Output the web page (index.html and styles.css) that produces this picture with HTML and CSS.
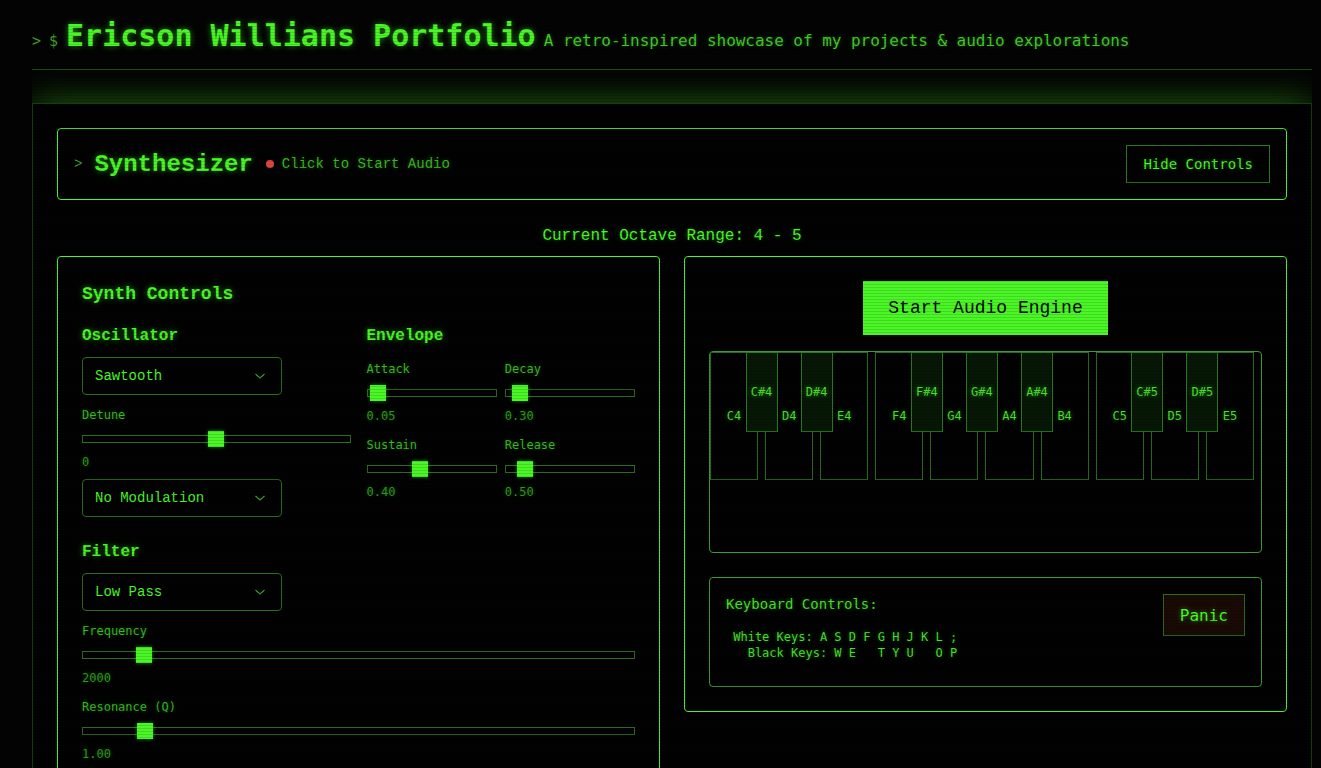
FILE: index.html
```html
<!DOCTYPE html>
<html lang="en">
<head>
<meta charset="utf-8">
<title>Ericson Willians Portfolio</title>
<link rel="stylesheet" href="styles.css">
</head>
<body>
<div class="page">
  <header class="site-header">
    <span class="prompt">&gt;</span>
    <span class="prompt">$</span>
    <h1 class="site-title">Ericson Willians Portfolio</h1>
    <span class="site-sub">A retro-inspired showcase of my projects &amp; audio explorations</span>
  </header>

  <main class="window">
    <div class="synth-head">
      <div class="synth-head-left">
        <span class="head-prompt">&gt;</span>
        <h2 class="synth-title">Synthesizer</h2>
        <span class="status-dot"></span>
        <span class="status-text">Click to Start Audio</span>
      </div>
      <button class="ghost-btn">Hide Controls</button>
    </div>

    <div class="octave">Current Octave Range: 4 - 5</div>

    <div class="panels">
      <section class="panel controls">
        <h3 class="panel-title">Synth Controls</h3>
        <div class="two-col">
          <div class="col">
            <h4 class="sec-title">Oscillator</h4>
            <div class="select-wrap">
              <select class="sel"><option>Sawtooth</option></select>
              <svg class="chev" width="12" height="8" viewBox="0 0 12 8"><path d="M1.5 2 L6 6 L10.5 2" fill="none" stroke="#3b9a2a" stroke-width="1.3"/></svg>
            </div>
            <div class="group g-detune">
              <label class="lbl">Detune</label>
              <input class="range" type="range" min="-100" max="100" value="0">
              <div class="val">0</div>
            </div>
            <div class="select-wrap">
              <select class="sel"><option>No Modulation</option></select>
              <svg class="chev" width="12" height="8" viewBox="0 0 12 8"><path d="M1.5 2 L6 6 L10.5 2" fill="none" stroke="#3b9a2a" stroke-width="1.3"/></svg>
            </div>
          </div>
          <div class="col">
            <h4 class="sec-title env-title">Envelope</h4>
            <div class="env-grid">
              <div class="group">
                <label class="lbl">Attack</label>
                <input class="range" type="range" min="0.01" max="2" step="0.01" value="0.05">
                <div class="val">0.05</div>
              </div>
              <div class="group">
                <label class="lbl">Decay</label>
                <input class="range" type="range" min="0.01" max="5" step="0.01" value="0.30">
                <div class="val">0.30</div>
              </div>
              <div class="group">
                <label class="lbl">Sustain</label>
                <input class="range" type="range" min="0" max="1" step="0.01" value="0.40">
                <div class="val">0.40</div>
              </div>
              <div class="group">
                <label class="lbl">Release</label>
                <input class="range" type="range" min="0.01" max="5" step="0.01" value="0.50">
                <div class="val">0.50</div>
              </div>
            </div>
          </div>
        </div>

        <div class="filter">
          <h4 class="sec-title">Filter</h4>
          <div class="select-wrap">
            <select class="sel"><option>Low Pass</option></select>
            <svg class="chev" width="12" height="8" viewBox="0 0 12 8"><path d="M1.5 2 L6 6 L10.5 2" fill="none" stroke="#3b9a2a" stroke-width="1.3"/></svg>
          </div>
          <div class="group g-freq">
            <label class="lbl">Frequency</label>
            <input class="range" type="range" min="20" max="20000" value="2000">
            <div class="val">2000</div>
          </div>
          <div class="group g-res">
            <label class="lbl">Resonance (Q)</label>
            <input class="range" type="range" min="0" max="10" step="0.01" value="1">
            <div class="val">1.00</div>
          </div>
        </div>
      </section>

      <section class="panel keys-panel">
        <div class="start-row"><button class="start-btn">Start Audio Engine</button></div>
        <div class="piano">
          <div class="wkey"><span>C4</span></div>
          <div class="wkey"><span>D4</span></div>
          <div class="wkey"><span>E4</span></div>
          <div class="wkey"><span>F4</span></div>
          <div class="wkey"><span>G4</span></div>
          <div class="wkey"><span>A4</span></div>
          <div class="wkey"><span>B4</span></div>
          <div class="wkey"><span>C5</span></div>
          <div class="wkey"><span>D5</span></div>
          <div class="wkey"><span>E5</span></div>
          <div class="bkey" style="left:35.5px"><span>C#4</span></div>
          <div class="bkey" style="left:90.6px"><span>D#4</span></div>
          <div class="bkey" style="left:200.8px"><span>F#4</span></div>
          <div class="bkey" style="left:255.9px"><span>G#4</span></div>
          <div class="bkey" style="left:311px"><span>A#4</span></div>
          <div class="bkey" style="left:421.2px"><span>C#5</span></div>
          <div class="bkey" style="left:476.3px"><span>D#5</span></div>
        </div>
        <div class="kb-box">
          <div class="kb-info">
            <p class="kb-title">Keyboard Controls:</p>
            <pre class="kb-map"> White Keys: A S D F G H J K L ;
   Black Keys: W E   T Y U   O P</pre>
          </div>
          <button class="panic-btn">Panic</button>
        </div>
      </section>
    </div>
  </main>
</div>
</body>
</html>
```

FILE: styles.css
```css
* { box-sizing: border-box; }

html, body {
  margin: 0;
  padding: 0;
  background: #030303;
  color: #4af626;
  font-family: "Liberation Mono", monospace;
}

body::after {
  content: "";
  position: fixed;
  inset: 0;
  pointer-events: none;
  background: repeating-linear-gradient(to bottom,
    rgba(0,0,0,0) 0px, rgba(0,0,0,0) 2px,
    rgba(0,0,0,0.12) 2px, rgba(0,0,0,0.12) 3px);
  z-index: 10;
}

.page {
  width: 1280px;
  margin-left: 32px;
  height: 768px;
  overflow: hidden;
}

/* header */
.site-header {
  display: flex;
  align-items: baseline;
  gap: 8px;
  padding-top: 18px;
  padding-bottom: 15px;
  border-bottom: 1px solid #1d4a12;
}
.prompt {
  font-family: "DejaVu Sans Mono", monospace;
  font-size: 15px;
  color: #3aa126;
}
.site-title {
  margin: 0;
  font-family: "DejaVu Sans Mono", monospace;
  font-size: 30px;
  line-height: 36px;
  font-weight: bold;
  color: #4af626;
  text-shadow: 0 0 6px rgba(74, 246, 38, 0.55);
}
.site-sub {
  font-family: "DejaVu Sans Mono", monospace;
  font-size: 16px;
  letter-spacing: -0.03px;
  color: #45c92a;
  text-shadow: 0 0 4px rgba(74, 246, 38, 0.35);
}

/* main window */
.window {
  margin-top: 33px;
  border: 1px solid #173c0e;
  background: #020202;
  box-shadow: 0 0 34px rgba(74, 246, 38, 0.42);
  padding: 24px;
  min-height: 800px;
}

.synth-head {
  height: 72px;
  border: 1px solid #4af626;
  border-radius: 4px;
  padding: 0 16px;
  display: flex;
  align-items: center;
  justify-content: space-between;
}
.synth-head-left {
  display: flex;
  align-items: center;
}
.head-prompt {
  font-size: 14px;
  color: #3a9a28;
  margin-right: 12px;
}
.synth-title {
  margin: 0;
  font-size: 24px;
  font-weight: bold;
  color: #4af626;
  text-shadow: 0 0 6px rgba(74, 246, 38, 0.55);
}
.status-dot {
  width: 8px;
  height: 8px;
  border-radius: 50%;
  background: #e0473c;
  margin-left: 13px;
  margin-right: 8px;
}
.status-text {
  font-size: 14px;
  color: #3fb524;
  text-shadow: 0 0 4px rgba(74, 246, 38, 0.35);
}
.ghost-btn {
  height: 38px;
  padding: 0 16px;
  background: #020202;
  border: 1px solid #2b7a1c;
  color: #4af626;
  font-family: "DejaVu Sans Mono", monospace;
  font-size: 14px;
  text-shadow: 0 0 4px rgba(74, 246, 38, 0.4);
}

.octave {
  margin-top: 25px;
  text-align: center;
  font-size: 16px;
  line-height: 22px;
  color: #4af626;
  text-shadow: 0 0 4px rgba(74, 246, 38, 0.4);
}

.panels {
  margin-top: 9px;
  display: grid;
  grid-template-columns: 1fr 1fr;
  gap: 24px;
  align-items: start;
}
.panel {
  border: 1px solid #4af626;
  border-radius: 4px;
  padding: 24px;
  background: #020202;
}

/* controls */
.panel-title {
  margin: 0 0 18px;
  font-size: 18px;
  line-height: 26px;
  font-weight: bold;
  color: #4af626;
  text-shadow: 0 0 6px rgba(74, 246, 38, 0.55);
}
.two-col {
  display: grid;
  grid-template-columns: 1fr 1fr;
  gap: 16px;
}
.sec-title {
  margin: 0 0 10px;
  font-size: 16px;
  line-height: 22px;
  font-weight: bold;
  color: #4af626;
  text-shadow: 0 0 6px rgba(74, 246, 38, 0.55);
}
.env-title { margin-bottom: 14px; }

.select-wrap {
  position: relative;
  width: 200px;
}
.sel {
  -webkit-appearance: none;
  appearance: none;
  width: 200px;
  height: 38px;
  padding: 0 12px;
  background: #020202;
  border: 1px solid #2b6c1c;
  border-radius: 4px;
  color: #4af626;
  font-family: "Liberation Mono", monospace;
  font-size: 14px;
}
.chev {
  position: absolute;
  right: 16px;
  top: 15px;
}

.group { display: flex; flex-direction: column; }
.lbl {
  font-family: "DejaVu Sans Mono", monospace;
  font-size: 12px;
  line-height: 16px;
  color: #3cb524;
  text-shadow: 0 0 4px rgba(74, 246, 38, 0.3);
  margin-bottom: 12px;
}
.val {
  font-family: "DejaVu Sans Mono", monospace;
  font-size: 12px;
  line-height: 16px;
  color: #2f9a1c;
  text-shadow: 0 0 4px rgba(74, 246, 38, 0.3);
  margin-top: 11px;
}
.g-detune { margin-top: 12px; margin-bottom: 9px; }

.range {
  -webkit-appearance: none;
  appearance: none;
  display: block;
  width: 100%;
  height: 8px;
  margin: 0;
  background: #020202;
  border: 1px solid #2b6c1c;
  outline: none;
}
.range::-webkit-slider-thumb {
  -webkit-appearance: none;
  appearance: none;
  width: 16px;
  height: 16px;
  background: #4af626;
  border: none;
  box-shadow: 0 0 4px rgba(74, 246, 38, 0.5);
}

.env-grid {
  display: grid;
  grid-template-columns: 1fr 1fr;
  column-gap: 8px;
  row-gap: 13px;
}

.filter { margin-top: 24px; }
.g-freq { margin-top: 12px; }
.g-res { margin-top: 13px; }

/* keys panel */
.start-row {
  display: flex;
  justify-content: center;
  margin-bottom: 16px;
}
.start-btn {
  height: 54px;
  padding: 0 25px;
  border: none;
  background: #4af626;
  color: #050505;
  font-family: "Liberation Mono", monospace;
  font-size: 18px;
}

.piano {
  position: relative;
  display: flex;
  height: 202px;
  border: 1px solid #3c9c36;
  border-radius: 4px;
}
.wkey {
  width: 48.1px;
  height: 128px;
  margin-right: 7px;
  border: 1px solid #2a6a1c;
  background: #020202;
  display: flex;
  align-items: center;
  justify-content: center;
}
.bkey {
  position: absolute;
  top: 0;
  width: 32px;
  height: 80px;
  border: 1px solid #2c7a1e;
  background: #061706;
  display: flex;
  align-items: center;
  justify-content: center;
}
.wkey span, .bkey span {
  font-family: "DejaVu Sans Mono", monospace;
  font-size: 12px;
  color: #4ade2c;
  text-shadow: 0 0 5px rgba(74, 246, 38, 0.5);
}

.kb-box {
  margin-top: 24px;
  border: 1px solid #3c9c36;
  border-radius: 4px;
  padding: 16px;
  display: flex;
  justify-content: space-between;
  align-items: flex-start;
}
.kb-title {
  margin: 0 0 15px;
  font-family: "DejaVu Sans Mono", monospace;
  font-size: 14px;
  line-height: 20px;
  color: #4ade2c;
  text-shadow: 0 0 4px rgba(74, 246, 38, 0.4);
}
.kb-map {
  margin: 0 0 9px;
  font-family: "DejaVu Sans Mono", monospace;
  font-size: 12px;
  line-height: 16px;
  color: #4ade2c;
  text-shadow: 0 0 4px rgba(74, 246, 38, 0.4);
}
.panic-btn {
  height: 42px;
  padding: 0 16px;
  background: #1a0a06;
  border: 1px solid #2b6c1c;
  color: #4af626;
  font-family: "DejaVu Sans Mono", monospace;
  font-size: 16px;
  text-shadow: 0 0 5px rgba(74, 246, 38, 0.55);
}
```
